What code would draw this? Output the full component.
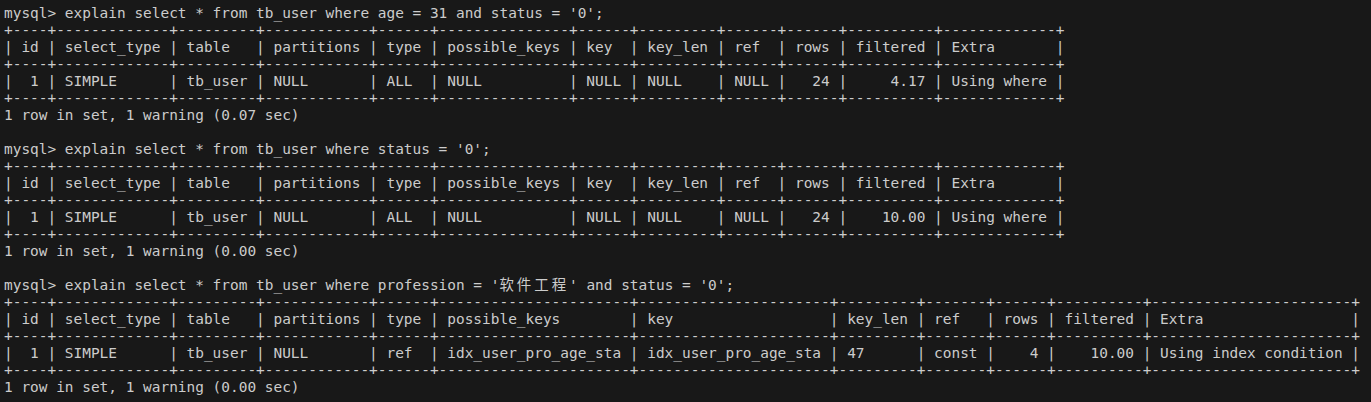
import React from "react";

type Table = {
  widths: number[];
  header: string[];
  row: string[];
};

// numeric columns are right aligned, like the mysql client does
const RIGHT = [true, false, false, false, false, false, false, false, false, true, true, false];

const HEADER = ["id", "select_type", "table", "partitions", "type", "possible_keys", "key", "key_len", "ref", "rows", "filtered", "Extra"];

function border(widths: number[]) {
  return "+" + widths.map((n) => "-".repeat(n + 2)).join("+") + "+";
}

function line(cells: string[], widths: number[], align: boolean) {
  return (
    "| " +
    cells.map((c, i) => (align && RIGHT[i] ? c.padStart(widths[i]) : c.padEnd(widths[i]))).join(" | ") +
    " |"
  );
}

function tableLines(t: Table) {
  const b = border(t.widths);
  return [b, line(t.header, t.widths, false), b, line(t.row, t.widths, true), b];
}

const blocks: { query: string; table: Table; footer: string }[] = [
  {
    query: "mysql> explain select * from tb_user where age = 31 and status = '0';",
    table: {
      widths: [2, 11, 7, 10, 4, 13, 4, 7, 4, 4, 8, 11],
      header: HEADER,
      row: ["1", "SIMPLE", "tb_user", "NULL", "ALL", "NULL", "NULL", "NULL", "NULL", "24", "4.17", "Using where"],
    },
    footer: "1 row in set, 1 warning (0.07 sec)",
  },
  {
    query: "mysql> explain select * from tb_user where status = '0';",
    table: {
      widths: [2, 11, 7, 10, 4, 13, 4, 7, 4, 4, 8, 11],
      header: HEADER,
      row: ["1", "SIMPLE", "tb_user", "NULL", "ALL", "NULL", "NULL", "NULL", "NULL", "24", "10.00", "Using where"],
    },
    footer: "1 row in set, 1 warning (0.00 sec)",
  },
  {
    query: "mysql> explain select * from tb_user where profession = '软件工程' and status = '0';",
    table: {
      widths: [2, 11, 7, 10, 4, 20, 20, 7, 5, 4, 8, 21],
      header: HEADER,
      row: ["1", "SIMPLE", "tb_user", "NULL", "ref", "idx_user_pro_age_sta", "idx_user_pro_age_sta", "47", "const", "4", "10.00", "Using index condition"],
    },
    footer: "1 row in set, 1 warning (0.00 sec)",
  },
];

// wide chars take two terminal cells
function TermText({ text }: { text: string }) {
  const parts: React.ReactNode[] = [];
  let buf = "";
  Array.from(text).forEach((ch, i) => {
    if (/[\u4e00-\u9fff]/.test(ch)) {
      if (buf) parts.push(buf);
      buf = "";
      parts.push(
        <span key={i} className="inline-block w-[17.4px]">
          {ch}
        </span>
      );
    } else {
      buf += ch;
    }
  });
  if (buf) parts.push(buf);
  return <>{parts}</>;
}

export default function App() {
  const lines: string[] = [];
  blocks.forEach((b) => {
    lines.push(b.query, ...tableLines(b.table), b.footer, "");
  });

  return (
    <div className="w-[1371px] h-[402px] overflow-hidden bg-[#181818] text-[#cccccc] pt-[5px] pl-[4px] font-['DejaVu_Sans_Mono','Noto_Sans_CJK_SC',monospace] text-[14.45px] leading-[17px]">
      {lines.map((l, i) => (
        <div key={i} className="h-[17px] whitespace-pre">
          <TermText text={l} />
        </div>
      ))}
    </div>
  );
}
